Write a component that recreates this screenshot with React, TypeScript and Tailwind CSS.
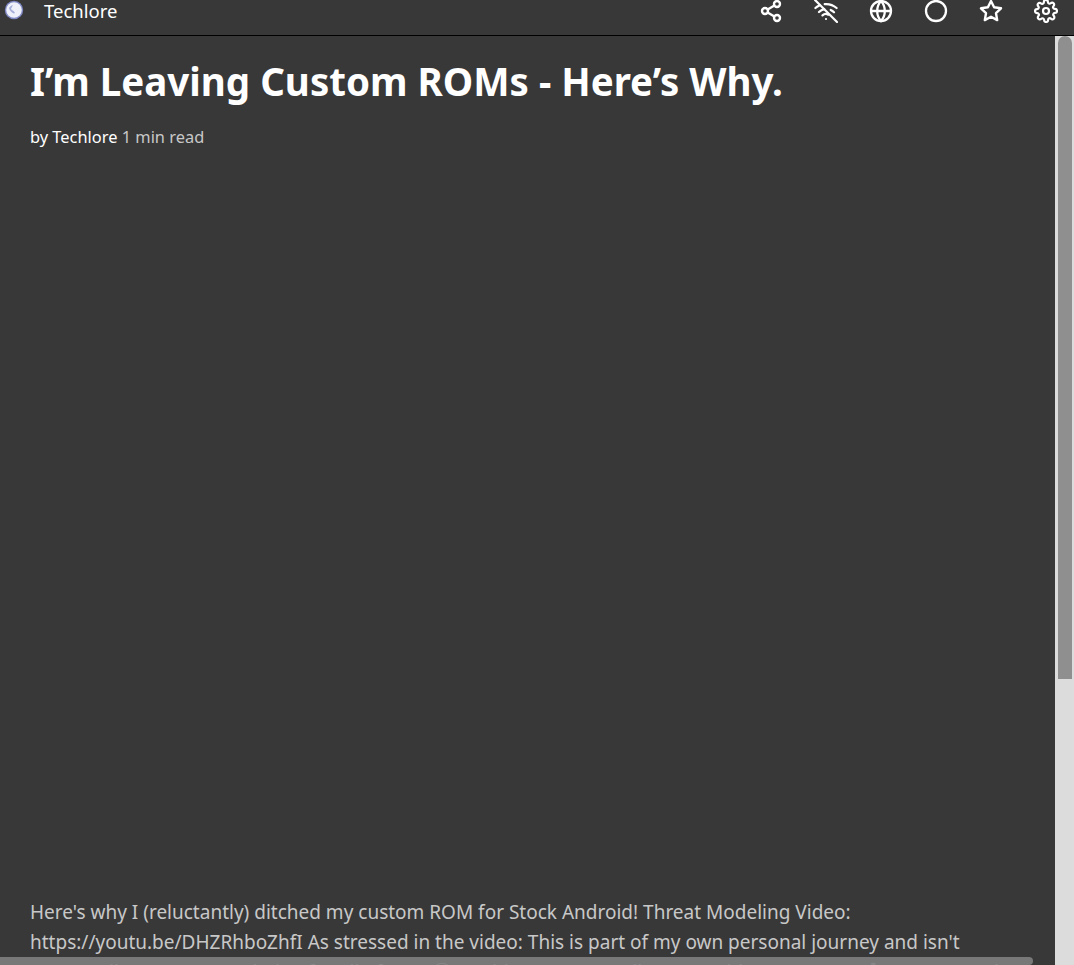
import React from "react";

const font = "font-['Noto_Sans','Open_Sans','Liberation_Sans',sans-serif]";
const emoji = "font-['DejaVu_Sans',sans-serif] [font-variant-emoji:text]";

const ShareIcon = () => (
    <svg width="24" height="24" viewBox="0 0 24 24" fill="none" stroke="white" strokeWidth="2.4">
        <circle cx="18" cy="5" r="3" />
        <circle cx="6" cy="12" r="3" />
        <circle cx="18" cy="19" r="3" />
        <path d="M8.6 13.5l6.8 4M15.4 6.5l-6.8 4" />
    </svg>
);

const WifiOffIcon = () => (
    <svg width="24" height="24" viewBox="0 0 24 24" fill="none" stroke="white" strokeWidth="2.2" strokeLinecap="round">
        <path d="M1 1l22 22" />
        <path d="M16.7 11a11 11 0 0 1 3.3 2.3M5 13a11 11 0 0 1 5.2-2.9M10.7 5.1A16 16 0 0 1 22.6 9M1.4 9a16 16 0 0 1 4.4-2.8M8.5 16.4a5 5 0 0 1 5.8-.7M12 20h.01" />
    </svg>
);

const GlobeIcon = () => (
    <svg width="24" height="24" viewBox="0 0 24 24" fill="none" stroke="white" strokeWidth="2.3">
        <circle cx="12" cy="12" r="10" />
        <path d="M2 12h20M12 2a15 15 0 0 1 0 20a15 15 0 0 1 0-20z" />
    </svg>
);

const CircleIcon = () => (
    <svg width="24" height="24" viewBox="0 0 24 24" fill="none" stroke="white" strokeWidth="2.3">
        <circle cx="12" cy="12" r="10" />
    </svg>
);

const StarIcon = () => (
    <svg width="24" height="24" viewBox="0 0 24 24" fill="none" stroke="white" strokeWidth="2.4" strokeLinejoin="round">
        <path d="M12 2l3.1 6.3 6.9 1-5 4.9 1.2 6.9-6.2-3.3-6.2 3.3L7 14.200l-5-4.900 6.900-1z" />
    </svg>
);

const GearIcon = () => (
    <svg width="24" height="24" viewBox="0 0 24 24" fill="none" stroke="white" strokeWidth="2.2" strokeLinecap="round" strokeLinejoin="round">
        <circle cx="12" cy="12" r="3" />
        <path d="M19.400 15a1.650 1.650 0 0 0 .33 1.820l.06.06a2 2 0 1 1-2.830 2.830l-.06-.06a1.650 1.650 0 0 0-2.800 1.170V21a2 2 0 1 1-4 0v-.09a1.650 1.650 0 0 0-2.800-1.170l-.06.06a2 2 0 1 1-2.830-2.830l.06-.06a1.650 1.650 0 0 0-1.170-2.800H3a2 2 0 1 1 0-4h.09a1.650 1.650 0 0 0 1.170-2.800l-.06-.06a2 2 0 1 1 2.830-2.830l.06.06a1.650 1.650 0 0 0 2.800-1.170V3a2 2 0 1 1 4 0v.09a1.650 1.650 0 0 0 2.800 1.170l.06-.06a2 2 0 1 1 2.830 2.830l-.06.06a1.650 1.650 0 0 0 1.170 2.800H21a2 2 0 1 1 0 4h-.09a1.650 1.650 0 0 0-1.510 1z" />
    </svg>
);

const Favicon = () => (
    <svg width="20" height="20" viewBox="0 0 20 20" className="blur-[0.7px]">
        <circle cx="10" cy="10" r="9.200" fill="#7f88c4" />
        <circle cx="10" cy="10" r="7.800" fill="#eef0fa" />
        <path d="M5 8c1-1.500 2-2.500 4-3-1 1.500-1 2.500-2 3.500 0 1.500 3 2 4 4.500-1.500 1-2.500 0-4-1.500-1-1-1.500-2-2-3.500z" fill="#a5add9" />
    </svg>
);

const App: React.FC = () => {
    return (
        <div className={`${font} relative flex flex-col h-[965px] w-[1074px] overflow-hidden bg-[#383838]`}>
            <header className="flex h-9 shrink-0 border-b border-black">
                <div className="w-9 pl-1 pt-0">
                    <Favicon />
                </div>
                <div className="pl-2 text-[18.500px] leading-[22px] text-white">Techlore</div>
                <div className="ml-auto -mt-px flex h-6 gap-[31px] pr-[16px]">
                    <ShareIcon />
                    <WifiOffIcon />
                    <GlobeIcon />
                    <CircleIcon />
                    <StarIcon />
                    <GearIcon />
                </div>
            </header>

            <div className="flex min-h-0 flex-1">
                <main className="min-w-0 flex-1 overflow-hidden pl-[30px] pr-[30px] pt-5">
                    <h1 className="text-[38.500px] font-bold leading-[50px] text-white">
                        I’m Leaving Custom ROMs - Here’s Why.
                    </h1>
                    <div className="mt-[19px] text-[16.400px] leading-[24px] text-[#c8c8c8]">
                        <span className="text-white">by Techlore</span> 1 min read
                    </div>
                    <p className="mt-[748px] text-[19px] leading-[30px] text-[#c8c8c8]">
                        Here's why I (reluctantly) ditched my custom ROM for Stock Android! Threat Modeling Video:
                        https://youtu.be/DHZRhboZhfI As stressed in the video: This is part of my own personal journey
                        and isn't necessarily a recommendation for all of you. <span className={emoji}>🙂</span> Nothing
                        wrong at all to stay with your setup! <span className={emoji}>🙏</span> Sources and links
                    </p>
                </main>
                <aside className="w-[19px] shrink-0 bg-[#dcdcdc] pl-[3px] pr-[2px]">
                    <div className="h-[643px] rounded-t-full rounded-b-[8px] bg-[#8f8f8f]" />
                </aside>
            </div>

            <div className="absolute bottom-0 left-0 h-2 w-[1033px] rounded-r-[4px] bg-[#808080]/90" />
        </div>
    );
};

export default App;
